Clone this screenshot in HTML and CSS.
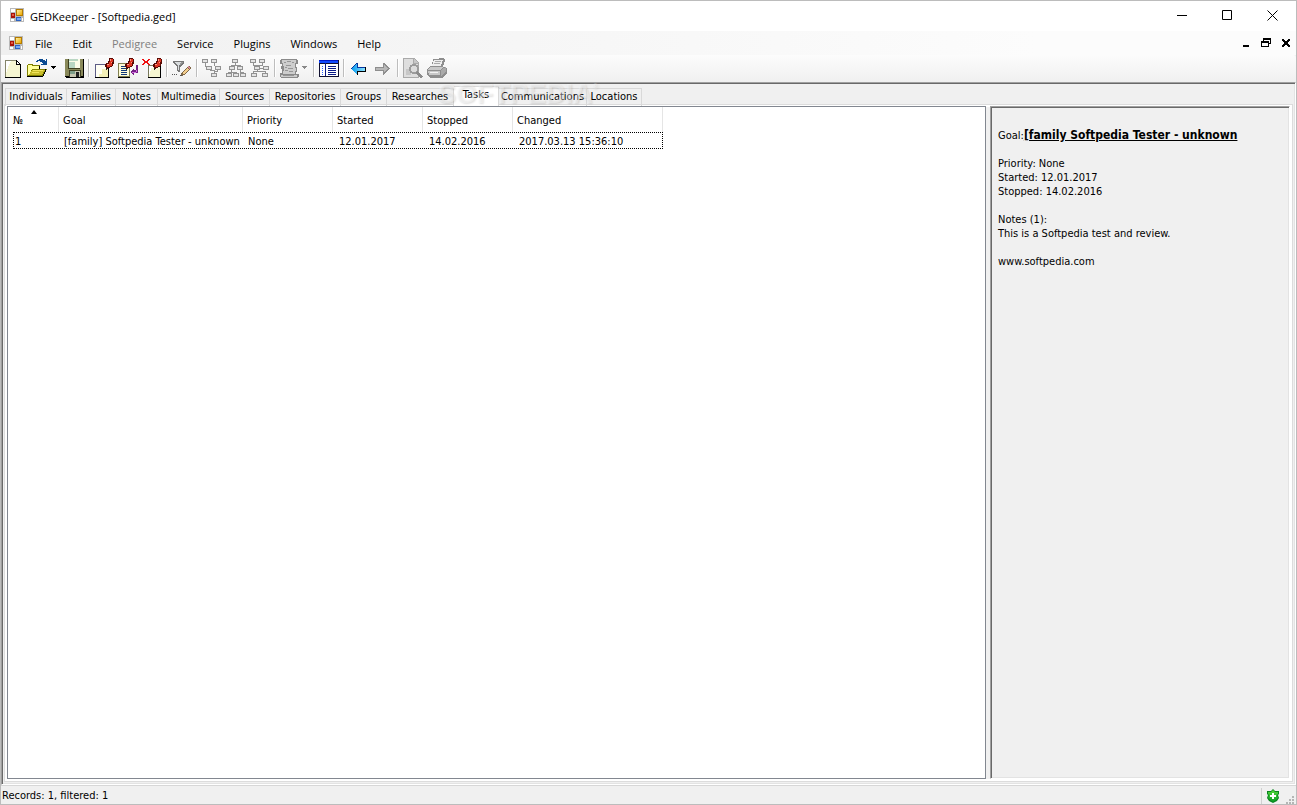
FILE: index.html
```html
<!DOCTYPE html>
<html lang="en">
<head>
  <meta charset="UTF-8">
  <meta name="viewport" content="width=device-width, initial-scale=1.0">
  <title>GEDKeeper - [Softpedia.ged]</title>
  <link rel="stylesheet" href="styles.css">
</head>
<body>
  <svg class="defs" width="0" height="0">
    <defs>
      <linearGradient id="gold" x1="0" y1="0" x2="1" y2="1">
        <stop offset="0" stop-color="#fff0a0"/><stop offset="1" stop-color="#eda800"/>
      </linearGradient>
      <linearGradient id="green" x1="0" y1="0" x2="0" y2="1">
        <stop offset="0" stop-color="#55d83c"/><stop offset="1" stop-color="#079b22"/>
      </linearGradient>
      <linearGradient id="blue" x1="0" y1="0" x2="1" y2="0">
        <stop offset="0" stop-color="#0a9cf0"/><stop offset="1" stop-color="#8fe4ff"/>
      </linearGradient>
      <symbol id="app" viewBox="0 0 14 14">
        <path fill="#b9b9b9" d="M0 0h14v14H0z"/>
        <path fill="#fff" d="M1 1h4v3H1zM1 11h3v2H1zM12 10h1v3h-1z"/>
        <path fill="#a91208" d="M1 5h4v5H1z"/><path fill="#e45a42" d="M2 6h2v2H2z"/>
        <path fill="#b47b00" d="M6 1h7v7H6z"/><path fill="url(#gold)" d="M7 2h5v5H7z"/>
        <path fill="#2b62c2" d="M6 9h5v4H6z"/><path fill="#78a9f5" d="M7 10h4v2H7z"/>
      </symbol>
      <symbol id="pin" viewBox="0 0 9 12">
        <path fill="#5a0a04" d="M4 0h4v1h1v5H8v2H7v1H5v1H3v1H1V9H0V6h1V5h2V3h1z"/>
        <path fill="#dc3422" d="M5 1h3v3H7v4H5v1H2V6h2V4h1z"/>
        <path fill="#ff9c84" d="M5 1h1v2H5zM2 6h2v1H2zM6 4h1v1H6z"/>
        <path fill="#222" d="M1 10h1v2H1z"/>
      </symbol>
      <symbol id="box" viewBox="0 0 6 4">
        <path fill="#929292" d="M0 0h6v4H0z"/><path fill="#e4e4e4" d="M1 1h4v2H1z"/>
      </symbol>
    </defs>
  </svg>

  <div class="window">
    <header class="titlebar">
      <svg class="app-icon" width="14" height="14"><use href="#app"/></svg>
      <h1>GEDKeeper - [Softpedia.ged]</h1>
      <div class="window-buttons">
        <button aria-label="Minimize"><svg width="11" height="11"><path d="M0 5.5h10" stroke="#000"/></svg></button>
        <button aria-label="Maximize"><svg width="11" height="11"><path d="M.5.5h9v9h-9z" fill="none" stroke="#000"/></svg></button>
        <button aria-label="Close"><svg width="11" height="11"><path d="M.5.5l10 10M10.500.5l-10 10" stroke="#000"/></svg></button>
      </div>
    </header>

    <nav class="menubar">
      <svg class="app-icon" width="14" height="14"><use href="#app"/></svg>
      <button>File</button>
      <button>Edit</button>
      <button disabled>Pedigree</button>
      <button>Service</button>
      <button>Plugins</button>
      <button>Windows</button>
      <button>Help</button>
      <div class="mdi-buttons">
        <button aria-label="Minimize document"><svg width="10" height="10"><path d="M2 7h6v2H2z"/></svg></button>
        <button aria-label="Restore document"><svg width="10" height="10"><path fill-rule="evenodd" d="M2 0h8v6H8v3H0V3h2zM3 2v1h5v2h1V2zM1 5v3h6V5z"/></svg></button>
        <button aria-label="Close document"><svg width="10" height="10"><path d="M1 1h2v1h1v1h2V2h1V1h2v2H8v1H7v2h1v1h1v2H7V8H6V7H4v1H3v1H1V7h1V6h1V4H2V3H1z"/></svg></button>
      </div>
    </nav>

    <div class="toolbar">
      <button aria-label="New file"><svg width="20" height="20">
        <path fill="#85856a" d="M2 2h12v1h1v1h1v1h1v1h1v14H2z"/><path fill="#f6f6d2" d="M3 3h10v4h4v12H3z"/>
        <path fill="#fff" d="M3 3h5v1H7v2H6v2H5v3H4v3H3z"/>
        <path d="M13 2h1v1h1v1h1v1h1v1h1v14H2v-1h15V7h-4z"/><path fill="#fff" d="M14 4h1v1h1v1h-2z"/></svg></button>
      <div class="split">
        <button aria-label="Open file"><svg width="20" height="20">
          <path fill="#808000" d="M0 7h1V6h5v1h7v4h7v1h-1v2h-1v2h-1v2h-1v1H0z"/>
          <path fill="#ffff9c" d="M1 7h4v1h7v3H5v1H4v2H3v2H2v1H1z"/>
          <path fill="#c9bd2c" d="M5 12h13l-3 5H2z"/><path fill="#f0e45a" d="M6 12h10v1H6zM5 14h7v1H5z"/>
          <path d="M0 18h16v1H0zM16 16h1v2h-1zM17 14h1v2h-1zM18 11h1v3h-1zM12 8h1v3h-1z"/>
          <path fill="#0b4a91" d="M9 3h1V2h2V1h4v1h2v1h1V1h1v6h-6V6h2V5h-1V4h-2V3h-2v1H9z"/></svg></button>
        <button class="drop" aria-label="Recent files"><svg width="5" height="3"><path d="M0 0h5L2.500 3z"/></svg></button>
      </div>
      <button aria-label="Save"><svg width="20" height="20">
        <path d="M1 1h19v19H2v-1H1z"/><path fill="#89895a" d="M1 1h18v17H1z"/><path fill="#3f3f20" d="M4 1h12v10H4zM5 12h12v7H5z"/>
        <path fill="#fcfce8" d="M5 1h11v9H5z"/><path fill="#b9d6c2" d="M5 4h6v6H5zM5 1h9v2H5z"/>
        <path fill="#c7c7b2" d="M6 13h10v6H6z"/><path fill="#222" d="M12 14h3v5h-3z"/><path fill="#7e9e8a" d="M6 13h5v3H6z"/></svg></button>
      <span class="sep"></span>
      <button aria-label="Add record"><svg width="20" height="20">
        <path fill="#5d5d86" d="M1 6h14v13H1z"/><path fill="#fffff4" d="M2 7h12v12H2z"/><path fill="#f3f0b8" d="M8 11h6v8H5v-3h3z"/>
        <path d="M1 19h14v1H1zM14 10h1v10h-1z"/><use href="#pin" x="11" y="0" width="9" height="12"/></svg></button>
      <button aria-label="Edit record"><svg width="20" height="20">
        <path fill="#807f50" d="M0 5h12v14H0z"/><path fill="#fffdd9" d="M1 6h10v12H1z"/><path d="M0 19h12v1H0z"/>
        <path fill="#123a7a" d="M3 8h4v1H3zM3 10h6v1H3zM3 12h6v1H3zM3 14h6v1H3zM3 16h6v1H3z"/>
        <use href="#pin" x="7" y="0" width="9" height="12"/>
        <path fill="#742084" d="M12 14l4-4v2h2V7h2v7l-1 1h-3v3z"/><path fill="#d06ce0" d="M14 14h4v-2h1v2h-1v1h-4z"/></svg></button>
      <button aria-label="Delete record"><svg width="20" height="20">
        <path fill="#77775a" d="M6 7h13v13H6z"/><path fill="#f6f6d2" d="M7 8h11v11H7z"/><path fill="#fff" d="M7 8h4v2H9v3H8v3H7z"/><path d="M6 19h13v1H6zM18 8h1v12h-1z"/>
        <path fill="#f01010" d="M0 1h2v1h1v1h2V2h1V1h2v1H7v1H6v2h1v1h1v1H6V6H5V5H3v1H2v1H0V6h1V5h1V3H1V2H0z"/>
        <use href="#pin" x="11" y="0" width="9" height="12"/></svg></button>
      <span class="sep"></span>
      <button aria-label="Filter"><svg width="20" height="20">
        <path fill="#777" d="M1 3h11v2L8 9v5H6l-1-1V9L1 5z"/><path fill="#d9dddf" d="M3 4h6L7 8v4H6V8z"/><path fill="#999" d="M9 4h2L8 7z"/>
        <path fill="#806848" d="M9 15l7-7h2l1 2-7 7-3 1z"/><path fill="#f3cd8c" d="M10 15l5-5 2 1-5 5z"/><path fill="#d78b9a" d="M15 9l2-1 1 2-1 1z"/>
        <path fill="#555" d="M0 16h1v1H0zM2 16h1v1H2zM4 16h1v1H4zM8 17h2v1H8z"/></svg></button>
      <span class="sep"></span>
      <button disabled aria-label="Ancestors tree"><svg width="20" height="20">
        <path fill="#929292" d="M3 5h1v3h8V5h1v3h-3v4h3v3h-1v-2H8V9H3zM15 12h1v2h-3v1h-1v-2h3z"/>
        <use href="#box" x="0" y="1" width="6" height="4"/><use href="#box" x="9" y="1" width="6" height="4"/><use href="#box" x="4" y="8" width="6" height="4"/>
        <use href="#box" x="13" y="8" width="6" height="4"/><use href="#box" x="9" y="15" width="6" height="4"/></svg></button>
      <button disabled aria-label="Descendants tree"><svg width="20" height="20">
        <path fill="#929292" d="M9 5h1v2h5v1h-1v1h-1V8H6v1H5V7h4zM5 12h1v2h5v1h-1H3v1H2v-2h3zM14 12h1v2h3v1h-4z"/>
        <use href="#box" x="6" y="1" width="6" height="4"/><use href="#box" x="3" y="8" width="6" height="4"/><use href="#box" x="11" y="8" width="6" height="4"/>
        <use href="#box" x="0" y="15" width="6" height="4"/><use href="#box" x="7" y="15" width="6" height="4"/><use href="#box" x="14" y="15" width="6" height="4"/></svg></button>
      <button disabled aria-label="Full tree"><svg width="20" height="20">
        <path fill="#929292" d="M3 5h1v2h8V5h1v3H8v2h5v1H8v2h8v2h-1v-1H4v1H3v-2h4V8H3z"/>
        <use href="#box" x="0" y="1" width="6" height="4"/><use href="#box" x="9" y="1" width="6" height="4"/><use href="#box" x="4" y="8" width="6" height="4"/>
        <use href="#box" x="13" y="8" width="6" height="4"/><use href="#box" x="1" y="15" width="6" height="4"/><use href="#box" x="12" y="15" width="6" height="4"/></svg></button>
      <span class="sep"></span>
      <div class="split narrow">
        <button disabled aria-label="Pedigree"><svg width="20" height="20">
          <path fill="#8a8a8a" d="M1 1h16v1h1v4h-2v3h1v5h-1v2h3v3h-1v1H1v-1H0v-4h2v-4H1V8h1V6H0V2h1z"/>
          <path fill="#cdcdcd" d="M2 2h14v3h-1v5h1v3h-1v3H3v-3h1V8H3V5H2zM1 17h16v2H1z"/>
          <path fill="#969696" d="M4 4h2v1H4zM7 3h4v1H7zM12 4h2v1h-2zM6 7h5v1H6zM5 9h2v1H5zM8 10h5v1H8zM5 12h3v1H5zM9 13h4v1H9zM3 17h11v1H3z"/></svg></button>
        <button disabled class="drop" aria-label="Pedigree kind"><svg width="5" height="3"><path fill="#888" d="M0 0h5L2.500 3z"/></svg></button>
      </div>
      <span class="sep"></span>
      <button aria-label="Statistics"><svg width="20" height="20">
        <path fill="#101030" d="M0 2h20v17H0z"/><path fill="#fff" d="M1 6h18v12H1z"/><path fill="#124bff" d="M0 2h19v3H0z"/><path fill="#0017c8" d="M0 2h19v1H0z"/>
        <path fill="#0b1b88" d="M6 5h1v13H6zM9 8h8v1H9zM9 10h8v1H9zM9 12h8v1H9zM9 14h8v1H9zM9 16h8v1H9z"/>
        <path fill="#2b60ff" d="M3 8h1v1H3zM3 10h1v1H3zM3 12h1v1H3zM3 14h1v1H3zM3 16h1v1H3z"/></svg></button>
      <span class="sep"></span>
      <button aria-label="Back"><svg width="20" height="20">
        <path fill="#0636a0" d="M2 10h1V9h1V8h1V7h1V6h1V5h2v4h8v5H9v3H8v-1H7v-1H6v-1H5v-1H4v-1H3v-1H2z"/>
        <path fill="url(#blue)" d="M3 10h1V9h1V8h1V7h1V6h1v4h8v3H8v3H7v-1H6v-1H5v-1H4v-1H3z"/><path d="M9 13h8v1H9zM8 13h1v4H8zM16 9h1v5h-1z"/></svg></button>
      <button disabled aria-label="Forward"><svg width="20" height="20">
        <path fill="#8e8e8e" d="M2 9h8V5h2v1h1v1h1v1h1v1h1v1h1v1h-1v1h-1v1h-1v1h-1v1h-1v1h-1v1h-1v-4H2z"/><path fill="#b8b8b8" d="M3 10h8V7h1v1h1v1h1v1h1v1h-1v1h-1v1h-1v1h-1v-2H3z"/></svg></button>
      <span class="sep"></span>
      <button disabled aria-label="Print preview"><svg width="20" height="20">
        <path fill="#aaa" d="M0 0h11l5 5v15H0z"/><path fill="#dedede" d="M1 1h9v5h5v13H1z"/><path fill="#c7c7c7" d="M11 1l4 4h-4zM3 11h5v6H3z"/>
        <circle cx="11" cy="11" r="4" fill="#dcdcdc" stroke="#9c9c9c" stroke-width="2"/><path fill="#8c8c8c" d="M14 13l6 5-2 2-6-5z"/></svg></button>
      <button disabled aria-label="Print"><svg width="20" height="20">
        <path fill="#8e8e8e" d="M6 1l11-1 1 2-2 7h3l1 2v4l-5 5H3l-3-3v-6l3-3h2z"/><path fill="#eee" d="M7 2h9l-2 6H5z"/>
        <path fill="#aaa" d="M8 3h6v1H8zM7 5h6v1H7z"/><path fill="#c8c8c8" d="M3 9h13l-3 3H1zM1 13h12v4H2z"/><path fill="#aaa" d="M14 12l5-3v5l-5 4z"/><path fill="#f2f2f2" d="M3 14h8v1H3z"/></svg></button>
    </div>

    <main class="mdi">
      <div class="tabs" role="tablist">
        <button role="tab">Individuals</button>
        <button role="tab">Families</button>
        <button role="tab">Notes</button>
        <button role="tab">Multimedia</button>
        <button role="tab">Sources</button>
        <button role="tab">Repositories</button>
        <button role="tab">Groups</button>
        <button role="tab">Researches</button>
        <button role="tab" class="active" aria-selected="true">Tasks</button>
        <button role="tab">Communications</button>
        <button role="tab">Locations</button>
        <span class="watermark" aria-hidden="true">SOFTPEDIA<sup>®</sup></span>
      </div>

      <div class="page">
        <section class="list">
          <table>
            <colgroup>
              <col class="col-num"><col class="col-goal"><col class="col-short"><col class="col-short"><col class="col-short"><col class="col-changed">
            </colgroup>
            <thead>
              <tr><th class="sorted">№</th><th>Goal</th><th>Priority</th><th>Started</th><th>Stopped</th><th>Changed</th></tr>
            </thead>
            <tbody>
              <tr><td>1</td><td>[family] Softpedia Tester - unknown</td><td>None</td><td class="date">12.01.2017</td><td class="date">14.02.2016</td><td class="date">2017.03.13 15:36:10</td></tr>
            </tbody>
          </table>
        </section>

        <aside class="summary">
          <p>Goal:<a href="#">[family Softpedia Tester - unknown</a></p>
          <p>Priority: None<br>Started: 12.01.2017<br>Stopped: 14.02.2016</p>
          <p>Notes (1):<br>This is a Softpedia test and review.</p>
          <p>www.softpedia.com</p>
        </aside>
      </div>
    </main>

    <footer class="statusbar">
      <span>Records: 1, filtered: 1</span>
      <div class="status-right">
        <svg width="12" height="14"><path fill="#0a8420" d="M6 0l2 2h4v3l-1 1 1 3-2 3-4 2-4-2-2-3 1-3-1-1V2h4z"/><path fill="url(#green)" d="M6 1l2 2h3v2l-1 1 1 3-2 2-3 2-3-2-2-2 1-3-1-1V3h3z"/><path fill="#fff" d="M5 4h2v2h2v2H7v2H5V8H3V6h2z"/></svg>
        <svg class="grip" width="8" height="8"><path fill="#b5b5b5" d="M6 0h2v2H6zM3 3h2v2H3zM6 3h2v2H6zM0 6h2v2H0zM3 6h2v2H3zM6 6h2v2H6z"/></svg>
      </div>
    </footer>
  </div>
</body>
</html>
```
FILE: styles.css
```css
* {
  box-sizing: border-box;
}
body {
  margin: 0;
  font-family: 'DejaVu Sans Condensed', 'Noto Sans', sans-serif;
  font-size: 11px;
  color: #000;
}
button {
  margin: 0;
  padding: 0;
  border: none;
  background: none;
  font: inherit;
  color: inherit;
}
svg {
  display: block;
  flex: none;
}
.defs {
  position: absolute;
}
.window {
  display: flex;
  flex-direction: column;
  height: 100vh;
  border: 1px solid #bcbcbc;
  background: #f0f0f0;
}

/* Title bar and menu */
.titlebar,
.menubar {
  display: flex;
  align-items: center;
  font-family: 'Open Sans', sans-serif;
}
.titlebar {
  height: 30px;
  padding: 0 1px 2px 9px;
  background: #fff;
}
.titlebar h1 {
  margin: 2px 0 0 6px;
  font-size: 11px;
  font-weight: normal;
}
.window-buttons,
.mdi-buttons {
  display: flex;
  margin-left: auto;
}
.window-buttons button {
  display: flex;
  justify-content: center;
  align-items: center;
  width: 45px;
  height: 28px;
}
.menubar {
  height: 24px;
  padding-left: 8px;
  background: linear-gradient(to right, #f0f0f0, #fcfcfc 80%);
}
.menubar > button {
  padding: 0 10px;
}
.menubar .app-icon {
  margin-right: 2px;
}
.menubar button:disabled {
  color: #808080;
}
.mdi-buttons button {
  display: flex;
  justify-content: center;
  width: 20px;
}

/* Toolbar */
.toolbar {
  display: flex;
  align-items: center;
  gap: 4px;
  height: 27px;
  padding: 0 0 2px 2px;
  border-radius: 0 3px 3px 0;
  background: linear-gradient(#fcfcfc, #f0f0f0);
}
.toolbar svg {
  shape-rendering: crispEdges;
}
.split {
  display: flex;
  align-items: center;
}
.drop {
  display: flex;
  justify-content: center;
  width: 13px;
}
.narrow .drop {
  width: 9px;
}
.sep {
  width: 2px;
  height: 18px;
  border-left: 1px solid #bdbdbd;
  border-right: 1px solid #fff;
}

/* Document area */
.mdi {
  display: flex;
  flex-direction: column;
  flex: 1;
  min-height: 0;
  padding: 3px 2px 2px;
  border: 1px solid;
  border-color: #a0a0a0 #fff #fff #a0a0a0;
  box-shadow: inset 1px 1px #696969, inset -1px -1px #e3e3e3;
}
.tabs {
  position: relative;
  display: grid;
  grid-template-columns: 62px 49px 42px 62px 50px 71px 46px 67px 45px 88px 55px;
  align-items: end;
  height: 18px;
  padding-left: 1px;
}
.tabs button {
  height: 18px;
  padding-bottom: 2px;
  border: 1px solid #d9d9d9;
  border-width: 1px 1px 0 0;
  white-space: nowrap;
}
.tabs button:first-child {
  border-left-width: 1px;
}
.tabs .active {
  height: 20px;
  padding-bottom: 4px;
  background: #fff;
}
.watermark {
  position: absolute;
  left: 434px;
  top: -7px;
  font: bold 27px/30px 'Liberation Sans', sans-serif;
  color: rgba(255, 255, 255, 0.4);
  text-shadow: 1px 1px 2px rgba(0, 0, 0, 0.12);
  pointer-events: none;
}
.watermark sup {
  font-size: 8px;
  vertical-align: 14px;
  line-height: 1;
}
.page {
  display: flex;
  flex: 1;
  gap: 4px;
  min-height: 0;
  padding: 1px 2px 2px;
  border: 1px solid #dcdcdc;
  background: #f0f0f0;
  box-shadow: inset 0 0 0 2px #fff;
}
.list {
  flex: 1;
  border: 1px solid #828790;
  background: #fff;
}
.list table {
  margin-left: 5px;
  table-layout: fixed;
  width: 650px;
  border-collapse: separate;
  border-spacing: 0;
}
.col-num {
  width: 46px;
}
.col-goal {
  width: 184px;
}
.col-short {
  width: 90px;
}
.col-changed {
  width: 150px;
}
th {
  height: 25px;
  padding: 2px 4px 0;
  border-right: 1px solid #e5e5e5;
  font-weight: normal;
  text-align: left;
}
th:first-child {
  padding-left: 0;
}
.sorted {
  position: relative;
}
.sorted::after {
  content: '';
  position: absolute;
  left: 18px;
  top: 3px;
  border: 3px solid transparent;
  border-top: none;
  border-bottom: 4px solid #000;
}
tbody tr {
  outline: 1px dotted #000;
  outline-offset: -1px;
}
td {
  height: 17px;
  padding: 1px 5px 0;
  white-space: nowrap;
}
td:first-child {
  padding-left: 2px;
}
td.date {
  padding-left: 6px;
}
.summary {
  flex: 0 0 300px;
  padding: 21px 7px;
  border: 1px solid;
  border-color: #a0a0a0 #fff #fff #a0a0a0;
  line-height: 14px;
  box-shadow: inset 1px 1px #696969, inset -1px -1px #e3e3e3;
}
.summary p {
  margin: 0 0 14px;
}
.summary a {
  font-size: 12px;
  font-weight: bold;
  color: #000;
}

/* Status bar */
.statusbar {
  display: flex;
  align-items: center;
  justify-content: space-between;
  height: 19px;
  padding: 1px 0 0 1px;
  border-top: 1px solid #d7d7d7;
}
.status-right {
  display: flex;
  align-items: center;
  gap: 7px;
  height: 16px;
  padding: 0 2px 0 5px;
  border-left: 1px solid #d0d0d0;
}
.grip {
  align-self: flex-end;
}
```
